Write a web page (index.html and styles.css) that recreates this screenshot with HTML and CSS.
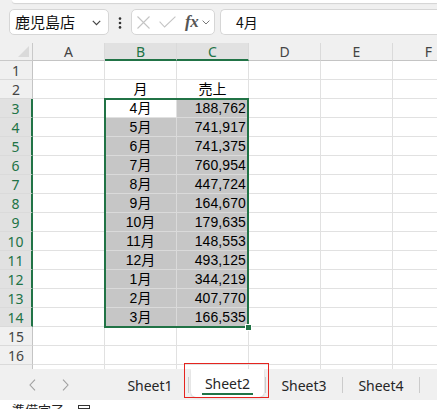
FILE: index.html
```html
<!DOCTYPE html>
<html lang="ja">
<head>
<meta charset="utf-8">
<title>Sheet2</title>
<link rel="stylesheet" href="styles.css">
</head>
<body>
<div class="app">
  <div class="ribbon-edge"></div>
  <div class="formula-row">
    <div class="namebox">
      <span class="namebox-text">鹿児島店</span>
      <svg class="chev" width="9" height="6" viewBox="0 0 9 6"><path d="M0.8 0.8 L4.5 4.6 L8.2 0.8" fill="none" stroke="#444" stroke-width="1.2"/></svg>
    </div>
    <div class="kebab">
      <svg width="4" height="12" viewBox="0 0 4 12"><circle cx="2" cy="1.6" r="1.3" fill="#333"/><circle cx="2" cy="6" r="1.3" fill="#333"/><circle cx="2" cy="10.4" r="1.3" fill="#333"/></svg>
    </div>
    <div class="fxbox">
      <svg class="ico-x" width="13" height="13" viewBox="0 0 13 13"><path d="M0.5 0.5 L12.5 12.5 M12.5 0.5 L0.5 12.5" stroke="#c4c4c4" stroke-width="1.1" fill="none"/></svg>
      <svg class="ico-check" width="17" height="12" viewBox="0 0 17 12"><path d="M0.6 5.6 L5.6 11 L16.4 0.6" stroke="#c4c4c4" stroke-width="1.1" fill="none"/></svg>
      <span class="fx">fx</span>
      <svg class="chev-s" width="8" height="5" viewBox="0 0 8 5"><path d="M0.6 0.6 L4 4 L7.4 0.6" fill="none" stroke="#777" stroke-width="1"/></svg>
    </div>
    <div class="formula-input">4月</div>
  </div>

  <div class="sheet">
    <div class="grid">
      <div class="corner"><span class="tri"></span></div>
      <div class="ch">A</div><div class="ch sel">B</div><div class="ch sel">C</div><div class="ch">D</div><div class="ch">E</div><div class="ch">F</div>

      <div class="rh">1</div><div class="c"></div><div class="c"></div><div class="c"></div><div class="c"></div><div class="c"></div><div class="c"></div>
      <div class="rh">2</div><div class="c"></div><div class="c ctr">月</div><div class="c ctr">売上</div><div class="c"></div><div class="c"></div><div class="c"></div>
      <div class="rh sel">3</div><div class="c"></div><div class="c ctr">4月</div><div class="c s num">188,762</div><div class="c"></div><div class="c"></div><div class="c"></div>
      <div class="rh sel">4</div><div class="c"></div><div class="c s ctr">5月</div><div class="c s num">741,917</div><div class="c"></div><div class="c"></div><div class="c"></div>
      <div class="rh sel">5</div><div class="c"></div><div class="c s ctr">6月</div><div class="c s num">741,375</div><div class="c"></div><div class="c"></div><div class="c"></div>
      <div class="rh sel">6</div><div class="c"></div><div class="c s ctr">7月</div><div class="c s num">760,954</div><div class="c"></div><div class="c"></div><div class="c"></div>
      <div class="rh sel">7</div><div class="c"></div><div class="c s ctr">8月</div><div class="c s num">447,724</div><div class="c"></div><div class="c"></div><div class="c"></div>
      <div class="rh sel">8</div><div class="c"></div><div class="c s ctr">9月</div><div class="c s num">164,670</div><div class="c"></div><div class="c"></div><div class="c"></div>
      <div class="rh sel">9</div><div class="c"></div><div class="c s ctr">10月</div><div class="c s num">179,635</div><div class="c"></div><div class="c"></div><div class="c"></div>
      <div class="rh sel">10</div><div class="c"></div><div class="c s ctr">11月</div><div class="c s num">148,553</div><div class="c"></div><div class="c"></div><div class="c"></div>
      <div class="rh sel">11</div><div class="c"></div><div class="c s ctr">12月</div><div class="c s num">493,125</div><div class="c"></div><div class="c"></div><div class="c"></div>
      <div class="rh sel">12</div><div class="c"></div><div class="c s ctr">1月</div><div class="c s num">344,219</div><div class="c"></div><div class="c"></div><div class="c"></div>
      <div class="rh sel">13</div><div class="c"></div><div class="c s ctr">2月</div><div class="c s num">407,770</div><div class="c"></div><div class="c"></div><div class="c"></div>
      <div class="rh sel">14</div><div class="c"></div><div class="c s ctr">3月</div><div class="c s num">166,535</div><div class="c"></div><div class="c"></div><div class="c"></div>
      <div class="rh">15</div><div class="c"></div><div class="c"></div><div class="c"></div><div class="c"></div><div class="c"></div><div class="c"></div>
      <div class="rh">16</div><div class="c"></div><div class="c"></div><div class="c"></div><div class="c"></div><div class="c"></div><div class="c"></div>
      <div class="rh"></div><div class="c"></div><div class="c"></div><div class="c"></div><div class="c"></div><div class="c"></div><div class="c"></div>
    </div>
    <div class="selection"></div>
    <div class="handle"></div>
  </div>

  <div class="tabbar">
    <div class="nav">
      <svg class="arr" width="7" height="12" viewBox="0 0 7 12"><path d="M6 0.6 L1 6 L6 11.4" fill="none" stroke="#a0a0a0" stroke-width="1.1"/></svg>
      <svg class="arr" width="7" height="12" viewBox="0 0 7 12"><path d="M1 0.6 L6 6 L1 11.4" fill="none" stroke="#a0a0a0" stroke-width="1.1"/></svg>
    </div>
    <div class="tab">Sheet1</div>
    <div class="sep"></div>
    <div class="tab active"><span class="tab-label">Sheet2</span></div>
    <div class="sep"></div>
    <div class="tab">Sheet3</div>
    <div class="sep"></div>
    <div class="tab">Sheet4</div>
    <div class="sep"></div>
    <div class="highlight-box"></div>
  </div>

  <div class="status">
    <span class="status-text">準備完了</span>
    <svg class="status-ico" width="12" height="10" viewBox="0 0 12 10"><rect x="0.5" y="0.5" width="11" height="9" fill="none" stroke="#333"/><path d="M0.5 3.5 H11.5 M4 3.5 V9.5" stroke="#333"/></svg>
  </div>
</div>
</body>
</html>
```
FILE: styles.css
```css
* { box-sizing: border-box; }
html, body { margin: 0; padding: 0; }
body {
  width: 437px;
  height: 409px;
  overflow: hidden;
  background: #f0f0f0;
  font-family: "Noto Sans", "Noto Sans CJK JP", sans-serif;
  color: #000;
}
.app {
  position: relative;
  width: 437px;
  height: 409px;
  overflow: hidden;
}
.ribbon-edge {
  height: 3px;
  margin-left: 12px;
  background: #fff;
  border-bottom-left-radius: 4px;
  box-shadow: 0 1px 1px rgba(0,0,0,0.12);
}
.formula-row {
  display: flex;
  align-items: center;
  height: 40px;
  padding: 6px 0 8px 9px;
}
.namebox {
  width: 100px;
  height: 26px;
  background: #fff;
  border: 1px solid #d6d6d6;
  border-radius: 5px;
  display: flex;
  align-items: center;
  justify-content: space-between;
  padding: 0 7px 0 5px;
}
.namebox-text {
  font-family: "Noto Sans CJK JP", sans-serif;
  font-size: 15px;
  line-height: 24px;
  color: #111;
}
.chev { display: block; margin-top: 1px; }
.kebab {
  width: 22px;
  display: flex;
  justify-content: center;
  padding-top: 1px;
}
.kebab svg { display: block; }
.fxbox {
  width: 84px;
  height: 26px;
  background: #fff;
  border: 1px solid #d6d6d6;
  border-radius: 5px;
  display: flex;
  align-items: center;
  padding-left: 5px;
}
.ico-x { display: block; margin-top: 1px; }
.ico-check { display: block; margin-left: 9px; margin-top: 0px; }
.fx {
  font-family: "Liberation Serif", "DejaVu Serif", serif;
  font-style: italic;
  font-weight: bold;
  font-size: 17px;
  color: #555;
  margin-left: 9px;
  letter-spacing: -0.5px;
  line-height: 20px;
}
.chev-s { display: block; margin-left: 4px; margin-top: 1px; }
.formula-input {
  flex: 1;
  margin-left: 5px;
  height: 26px;
  background: #fff;
  border: 1px solid #d6d6d6;
  border-right: none;
  border-radius: 5px 0 0 5px;
  padding-left: 15px;
  font-family: "Noto Sans CJK JP", sans-serif;
  font-size: 14px;
  line-height: 24px;
  color: #111;
}

/* sheet */
.sheet {
  position: relative;
  height: 326px;
  overflow: hidden;
  background: #fff;
}
.grid {
  display: grid;
  grid-template-columns: 33px repeat(6, 72px);
  grid-template-rows: 18px;
  grid-auto-rows: 19px;
  width: 465px;
}
.corner {
  position: relative;
  background: #f0f0f0;
  border-right: 1px solid #c9c9c9;
  border-bottom: 1px solid #c9c9c9;
}
.tri {
  position: absolute;
  right: 3px;
  bottom: 3px;
  width: 0;
  height: 0;
  border-left: 11px solid transparent;
  border-bottom: 11px solid #dadada;
}
.ch {
  background: #f0f0f0;
  border-right: 1px solid #dadada;
  border-bottom: 1px solid #c4c4c4;
  text-align: center;
  font-size: 14px;
  line-height: 17px;
  color: #444;
}
.ch.sel {
  background: #e1e1e1;
  color: #217346;
  border-bottom: 2px solid #217346;
}
.rh {
  background: #f0f0f0;
  border-right: 1px solid #c4c4c4;
  border-bottom: 1px solid #dadada;
  text-align: center;
  font-size: 14px;
  line-height: 19px;
  color: #444;
}
.rh.sel {
  background: #e1e1e1;
  color: #217346;
  border-right: 2px solid #217346;
}
.c {
  border-right: 1px solid #e1e1e1;
  border-bottom: 1px solid #e1e1e1;
  font-family: "Liberation Sans", "Noto Sans CJK JP", sans-serif;
  font-size: 14px;
  line-height: 19px;
  white-space: nowrap;
  overflow: hidden;
  color: #000;
}
.c.s {
  background: #c6c6c6;
  border-color: #dadada;
}
.ctr { text-align: center; }
.num { text-align: right; padding-right: 2px; letter-spacing: 0.1px; }

.selection {
  position: absolute;
  left: 104px;
  top: 55px;
  width: 145px;
  height: 230px;
  border: 2px solid #217346;
  pointer-events: none;
}
.handle {
  position: absolute;
  left: 245px;
  top: 281px;
  width: 7px;
  height: 7px;
  background: #217346;
  border: 1px solid #fff;
}

/* tabs */
.tabbar {
  position: relative;
  height: 31px;
  background: #f0f0f0;
  display: flex;
  align-items: stretch;
}
.nav {
  width: 112px;
  display: flex;
  align-items: center;
  gap: 26px;
  padding-left: 29px;
  padding-top: 1px;
}
.arr { display: block; }
.tab {
  width: 76px;
  display: flex;
  align-items: center;
  justify-content: center;
  font-family: "Noto Sans", sans-serif;
  font-size: 14px;
  color: #262626;
  padding-top: 2px;
}
.tab.active {
  margin: 0 1px 3px 2px;
  width: 73px;
  background: #fff;
  border-radius: 0 0 5px 5px;
  box-shadow: 0 1px 2px rgba(0,0,0,0.15);
  padding-top: 0;
}
.tab-label {
  display: inline-block;
  padding: 0 3px;
  line-height: 19px;
  border-bottom: 2px solid #217346;
  margin-top: 2px;
}
.sep {
  width: 1px;
  margin: 8px 0 7px;
  background: #cbcbcb;
}
.highlight-box {
  position: absolute;
  left: 184px;
  top: -6px;
  width: 85px;
  height: 35px;
  border: 1px solid #e5241f;
  pointer-events: none;
}

/* status */
.status {
  height: 20px;
  background: #fff;
  display: flex;
  align-items: flex-start;
  padding: 1px 0 0 12px;
}
.status-text {
  font-family: "Noto Sans CJK JP", sans-serif;
  font-size: 13px;
  line-height: 17px;
  color: #222;
}
.status-ico { display: block; margin-left: 14px; margin-top: 4px; }
```
